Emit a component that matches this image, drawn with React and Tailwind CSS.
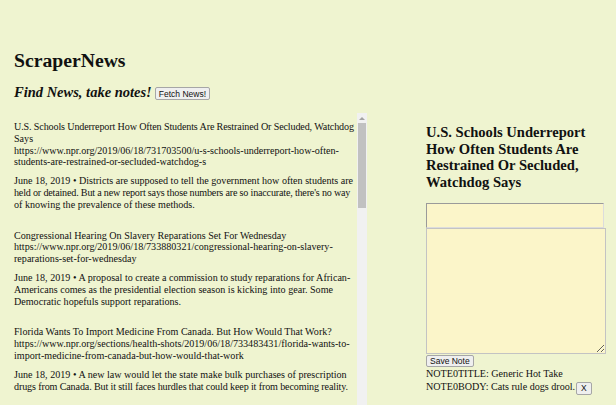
import React from 'react';

// line breaks follow the reference layout; a few long lines get tighter tracking
const ARTICLES = [
  {
    head: [
      ['U.S. Schools Underreport How Often Students Are Restrained Or Secluded, Watchdog', 'tracking-[-0.13px]'],
      'Says',
      'https://www.npr.org/2019/06/18/731703500/u-s-schools-underreport-how-often-',
      'students-are-restrained-or-secluded-watchdog-s',
    ],
    summary: [
      'June 18, 2019 • Districts are supposed to tell the government how often students are',
      ["held or detained. But a new report says those numbers are so inaccurate, there's no way", 'tracking-[-0.18px]'],
      'of knowing the prevalence of these methods.',
    ],
  },
  {
    head: [
      'Congressional Hearing On Slavery Reparations Set For Wednesday',
      'https://www.npr.org/2019/06/18/733880321/congressional-hearing-on-slavery-',
      'reparations-set-for-wednesday',
    ],
    summary: [
      'June 18, 2019 • A proposal to create a commission to study reparations for African-',
      'Americans comes as the presidential election season is kicking into gear. Some',
      'Democratic hopefuls support reparations.',
    ],
  },
  {
    head: [
      'Florida Wants To Import Medicine From Canada. But How Would That Work?',
      'https://www.npr.org/sections/health-shots/2019/06/18/733483431/florida-wants-to-',
      'import-medicine-from-canada-but-how-would-that-work',
    ],
    summary: [
      'June 18, 2019 • A new law would let the state make bulk purchases of prescription',
      ['drugs from Canada. But it still faces hurdles that could keep it from becoming reality.', 'tracking-[-0.13px]'],
    ],
  },
];

const btn =
  "bg-[#efefef] border border-[#a6a6a6] rounded-[2px] text-[8.5px] leading-[10px] text-[#111] font-[family-name:'Liberation_Sans',Arial,sans-serif] px-[3px]";

function Lines({ lines }) {
  return lines.map((l, i) => {
    const [text, extra] = Array.isArray(l) ? l : [l, ''];
    return (
      <div key={i} className={`whitespace-nowrap ${extra}`}>
        {text}
      </div>
    );
  });
}

export default function App() {
  return (
    <div className="h-[405px] overflow-hidden bg-[#eff4d0] text-[#111] font-[family-name:'Liberation_Serif','Times_New_Roman',serif] flex">
      {/* left: header + article list */}
      <div className="w-[367px] flex flex-col shrink-0">
        <div className="pl-[14px] pt-[48px]">
          <h1 className="text-[19.7px] leading-[24px] font-bold">ScraperNews</h1>
          <div className="mt-[11px] flex items-end h-[18px]">
            <h2 className="text-[14.5px] leading-[17px] font-bold italic">Find News, take notes!</h2>
            <button className={`${btn} h-[13px] ml-[3px] mb-[1px]`}>Fetch News!</button>
          </div>
        </div>

        <div className="mt-[12px] flex flex-1 min-h-0">
          <div className="w-[357px] pl-[14px] pt-[8px] overflow-hidden text-[10.1px] leading-[11.8px]">
            {ARTICLES.map((a, i) => (
              <div key={i} className={i === 0 ? '' : 'mt-[19px]'}>
                <Lines lines={a.head} />
                <div className="mt-[7px]">
                  <Lines lines={a.summary} />
                </div>
              </div>
            ))}
          </div>
          {/* scrollbar */}
          <div className="w-[10px] bg-[#f1f1f1] flex flex-col items-center">
            <div className="mt-[4px] w-0 h-0 border-l-[3px] border-r-[3px] border-b-[3px] border-l-transparent border-r-transparent border-b-[#a3a3a3]" />
            <div className="mt-[3px] w-[8px] h-[85px] bg-[#c1c1c1]" />
          </div>
        </div>
      </div>

      {/* right: note panel */}
      <div className="ml-[59px] w-[181px] pt-[124px] flex flex-col items-start">
        <h2 className="text-[14.6px] leading-[16.7px] font-bold">
          U.S. Schools Underreport How Often Students Are Restrained Or Secluded, Watchdog Says
        </h2>
        <input
          className="mt-[12px] w-[178px] h-[25px] bg-[#fbf5c9] border border-t-[#9a9a9a] border-l-[#9a9a9a] border-r-[#dcdcdc] border-b-[#dcdcdc] outline-none"
          type="text"
        />
        <textarea className="w-[180px] h-[126px] bg-[#fbf5c9] border border-[#c3c3c3] outline-none" />
        <button className={`${btn} h-[12px] mt-[1px]`}>Save Note</button>
        <div className="mt-[1px] text-[10.1px] leading-[12px]">NOTE0TITLE: Generic Hot Take</div>
        <div className="flex items-center text-[10.1px] leading-[12px]">
          NOTE0BODY: Cats rule dogs drool.
          <button className={`${btn} h-[13px] ml-[1px] mt-[2px] px-[4px]`}>X</button>
        </div>
      </div>
    </div>
  );
}
